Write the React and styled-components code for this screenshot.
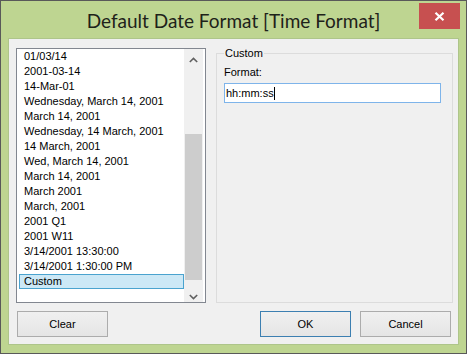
import React, { useState } from 'react';
import styled, { createGlobalStyle } from 'styled-components';

const GlobalStyle = createGlobalStyle`
  html, body {
    margin: 0;
    padding: 0;
    overflow: hidden;
    background: #ffffff;
  }
  * {
    box-sizing: border-box;
  }
`;

const Window = styled.div`
  width: 467px;
  height: 354px;
  display: flex;
  flex-direction: column;
  background: #bed591;
  border: 1px solid #595959;
  font-family: "Liberation Sans", Arial, sans-serif;
  font-size: 11px;
  color: #000;
`;

const TitleBar = styled.div`
  height: 37px;
  flex-shrink: 0;
  display: grid;
  grid-template-columns: 1fr auto 1fr;
`;

const Title = styled.div`
  grid-column: 2;
  margin-top: 8px;
  font-family: Lato, "Open Sans", sans-serif;
  font-size: 19px;
  line-height: 24px;
  color: #1e221a;
  white-space: nowrap;
`;

const CloseButton = styled.div`
  grid-column: 3;
  justify-self: end;
  align-self: start;
  width: 41px;
  height: 26px;
  margin: 2px 6px 0 0;
  background: #c75050;
  display: flex;
  align-items: center;
  justify-content: center;
`;

const Client = styled.div`
  flex: 1;
  margin: 0 7px 8px 7px;
  border: 1px solid #aec58a;
  background: #f0f0f0;
  padding: 9px 5px 7px 7px;
  display: flex;
  flex-direction: column;
`;

const Body = styled.div`
  height: 255px;
  display: flex;
  gap: 10px;
`;

const ListBox = styled.div`
  width: 190px;
  display: flex;
  background: #fff;
  border: 1px solid #828790;
  padding: 0 2px 0 1px;
`;

const ItemList = styled.div`
  flex: 1;
  display: flex;
  flex-direction: column;
`;

const Item = styled.div`
  height: 15px;
  line-height: 13px;
  margin-left: 1px;
  padding-left: 4px;
  white-space: nowrap;
  border: 1px solid ${p => (p.selected ? '#4aa3cf' : 'transparent')};
  background: ${p => (p.selected ? '#cce8f6' : 'transparent')};
`;

const ScrollBar = styled.div`
  width: 19px;
  display: flex;
  flex-direction: column;
  background: #f0f0f0;
`;

const ArrowButton = styled.div`
  height: 17px;
  display: flex;
  align-items: center;
  justify-content: center;
  padding-top: ${p => (p.down ? '6px' : '4px')};
`;

const Track = styled.div`
  flex: 1;
  padding: 68px 0 0 0;
`;

const Thumb = styled.div`
  height: 146px;
  margin: 0 1px;
  background: #cdcdcd;
`;

const GroupBox = styled.fieldset`
  flex: 1;
  margin: 0;
  min-width: 0;
  border: 1px solid #dcdcdc;
  padding: 0 11px 0 7px;
`;

const Legend = styled.legend`
  padding: 0 1px;
  line-height: 11px;
  color: #000;
`;

const Label = styled.div`
  margin: 7px 0 4px;
  line-height: 13px;
`;

const TextBox = styled.div`
  width: 217px;
  height: 20px;
  background: #fff;
  border: 1px solid #7eb4ea;
  padding-left: 1px;
  display: flex;
  align-items: center;
  line-height: 13px;
`;

const Caret = styled.span`
  display: inline-block;
  width: 1px;
  height: 13px;
  background: #000;
`;

const ButtonRow = styled.div`
  margin-top: 8px;
  display: flex;
  gap: 9px;
  padding: 0 2px 0 1px;
`;

const Spacer = styled.div`
  flex: 1;
`;

const Button = styled.button`
  width: 91px;
  height: 26px;
  padding: 0;
  font-family: "Liberation Sans", Arial, sans-serif;
  font-size: 11px;
  color: #000;
  background: linear-gradient(#f0f0f0, #e5e5e5);
  border: 1px solid ${p => (p.primary ? '#3c7fb1' : '#acacac')};
  border-radius: 0;
  outline: none;
`;

const formats = [
  '01/03/14',
  '2001-03-14',
  '14-Mar-01',
  'Wednesday, March 14, 2001',
  'March 14, 2001',
  'Wednesday, 14 March, 2001',
  '14 March, 2001',
  'Wed, March 14, 2001',
  'March 14, 2001',
  'March 2001',
  'March, 2001',
  '2001 Q1',
  '2001 W11',
  '3/14/2001 13:30:00',
  '3/14/2001 1:30:00 PM',
  'Custom'
];

const Chevron = ({ down }) => (
  <svg width="9" height="6" viewBox="0 0 9 6">
    <polyline
      points={down ? '0.8,1 4.5,4.6 8.2,1' : '0.8,5 4.5,1.4 8.2,5'}
      fill="none"
      stroke="#606060"
      strokeWidth="1.6"
    />
  </svg>
);

export default function App() {
  const [selected, setSelected] = useState(formats.length - 1);

  return (
    <>
      <GlobalStyle />
      <Window>
        <TitleBar>
          <Title>Default Date Format [Time Format]</Title>
          <CloseButton>
            <svg width="11" height="9" viewBox="0 0 11 9">
              <path d="M1.5 0.8 L9.5 8.2 M9.5 0.8 L1.5 8.2" stroke="#fff" strokeWidth="2.2" />
            </svg>
          </CloseButton>
        </TitleBar>
        <Client>
          <Body>
            <ListBox>
              <ItemList>
                {formats.map((f, i) => (
                  <Item key={i} selected={i === selected} onClick={() => setSelected(i)}>
                    {f}
                  </Item>
                ))}
              </ItemList>
              <ScrollBar>
                <ArrowButton>
                  <Chevron />
                </ArrowButton>
                <Track>
                  <Thumb />
                </Track>
                <ArrowButton down>
                  <Chevron down />
                </ArrowButton>
              </ScrollBar>
            </ListBox>
            <GroupBox>
              <Legend>Custom</Legend>
              <Label>Format:</Label>
              <TextBox>
                hh:mm:ss
                <Caret />
              </TextBox>
            </GroupBox>
          </Body>
          <ButtonRow>
            <Button>Clear</Button>
            <Spacer />
            <Button primary>OK</Button>
            <Button>Cancel</Button>
          </ButtonRow>
        </Client>
      </Window>
    </>
  );
}
